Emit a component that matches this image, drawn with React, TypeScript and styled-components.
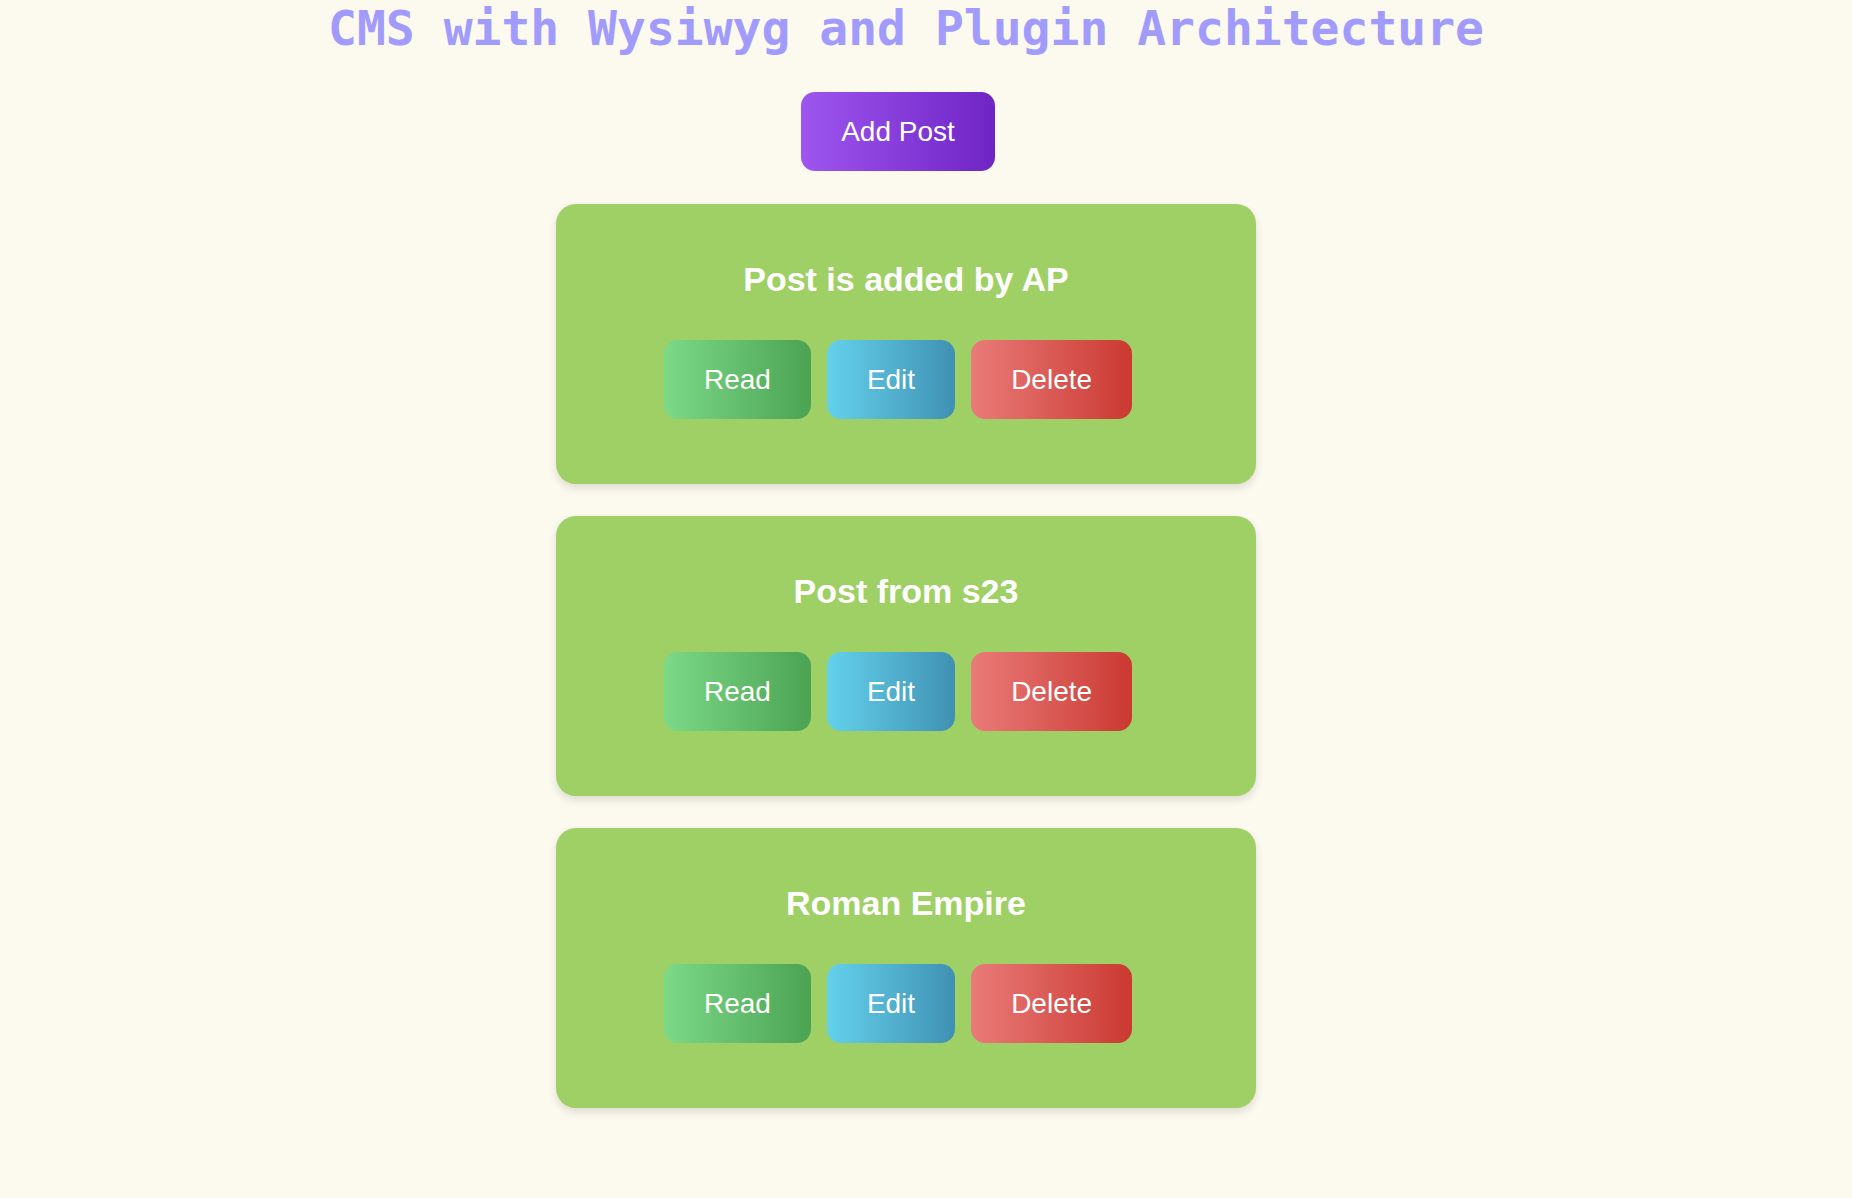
import React from 'react'
import styled, { createGlobalStyle } from 'styled-components';

const GlobalStyle = createGlobalStyle`
  body {
    margin:0;
    background:#fcf9ee;
    font-family: "Liberation Sans", Arial, sans-serif;
  }
`;

const Page = styled.div`
  display:flex;
  flex-direction:column;
  align-items:center;
  padding-right:40px;
  min-height:1198px;
  box-sizing:border-box;
`;

const Title = styled.h1`
  margin:0 0 36px;
  font-family:"DejaVu Sans Mono", monospace;
  font-size:48px;
  font-weight:bold;
  color:#a29bfe;
  text-align:center;
`;

type Variant = 'add' | 'read' | 'edit' | 'delete';

const gradients: Record<Variant, string> = {
  add: 'linear-gradient(to right, #9e56ef, #6f24c4)',
  read: 'linear-gradient(to right, #7bd987, #4ba353)',
  edit: 'linear-gradient(to right, #64d1eb, #3f91b3)',
  delete: 'linear-gradient(to right, #e97b78, #cb3932)',
};

const Button = styled.button<{ $variant: Variant }>`
  border:none;
  margin:0 16px 0 0;
  padding:0 40px;
  height:79px;
  border-radius:14px;
  background:${({ $variant }) => gradients[$variant]};
  color:#fff;
  font-family:"Liberation Sans", Arial, sans-serif;
  font-size:28px;
  cursor:pointer;
`;

const AddRow = styled.div`
  display:flex;
  justify-content:center;
  margin-bottom:33px;
`;

const List = styled.div`
  display:flex;
  flex-direction:column;
  gap:32px;
`;

const Card = styled.div`
  width:700px;
  height:280px;
  box-sizing:border-box;
  background:#9fd065;
  border-radius:20px;
  box-shadow:0 4px 8px rgba(0,0,0,0.12);
  padding:56px 32px 0;
  display:flex;
  flex-direction:column;
  align-items:center;
`;

const CardTitle = styled.h2`
  margin:0 0 41px;
  font-size:34px;
  line-height:39px;
  font-weight:bold;
  color:#fff;
`;

const ButtonRow = styled.div`
  display:flex;
  justify-content:center;
`;

const posts = ['Post is added by AP', 'Post from s23', 'Roman Empire'];

const App = () => {
  return (
    <>
      <GlobalStyle />
      <Page>
        <Title>CMS with Wysiwyg and Plugin Architecture</Title>
        <AddRow>
          <Button $variant="add">Add Post</Button>
        </AddRow>
        <List>
          {posts.map((p) => (
            <Card key={p}>
              <CardTitle>{p}</CardTitle>
              <ButtonRow>
                <Button $variant="read">Read</Button>
                <Button $variant="edit">Edit</Button>
                <Button $variant="delete">Delete</Button>
              </ButtonRow>
            </Card>
          ))}
        </List>
      </Page>
    </>
  )
}

export default App
